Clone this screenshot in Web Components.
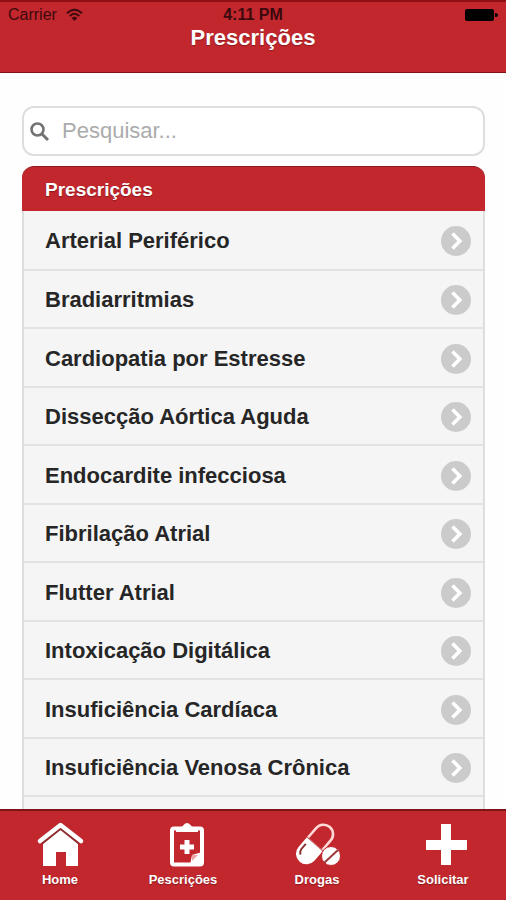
<!DOCTYPE html>
<html lang="pt-BR">
<head>
<meta charset="utf-8">
<meta name="viewport" content="width=device-width, initial-scale=1">
<title>Prescrições</title>
<style>
  :root { --red: #c1272d; --dark-red: #7d1418; --line: #dedede; --row: #f5f5f5; }
  body { margin: 0; background: #fefefe; font-family: "Liberation Sans", Arial, sans-serif; color: #262626; }
</style>
</head>
<body>
<rx-app>
  <rx-header slot="header" heading="Prescrições"></rx-header>
  <rx-search placeholder="Pesquisar..."></rx-search>
  <rx-list heading="Prescrições">
    <rx-row>Arterial Periférico</rx-row>
    <rx-row>Bradiarritmias</rx-row>
    <rx-row>Cardiopatia por Estresse</rx-row>
    <rx-row>Dissecção Aórtica Aguda</rx-row>
    <rx-row>Endocardite infecciosa</rx-row>
    <rx-row>Fibrilação Atrial</rx-row>
    <rx-row>Flutter Atrial</rx-row>
    <rx-row>Intoxicação Digitálica</rx-row>
    <rx-row>Insuficiência Cardíaca</rx-row>
    <rx-row>Insuficiência Venosa Crônica</rx-row>
  </rx-list>
  <rx-tabbar slot="footer">
    <rx-tab icon="home">Home</rx-tab>
    <rx-tab icon="clipboard">Pescrições</rx-tab>
    <rx-tab icon="pills">Drogas</rx-tab>
    <rx-tab icon="plus">Solicitar</rx-tab>
  </rx-tabbar>
</rx-app>

<script>
const define = (name, render) => customElements.define(name, class extends HTMLElement {
  connectedCallback() {
    if (!this.shadowRoot) this.attachShadow({ mode: 'open' }).innerHTML = render(this);
  }
});

define('rx-app', () => `
  <style>
    :host { display: flex; flex-direction: column; height: 100vh; }
    main { flex: 1 1 0; min-height: 0; overflow: hidden; padding: 33px 21px 0 22px; display: flex; flex-direction: column; gap: 10px; }
  </style>
  <slot name="header"></slot>
  <main><slot></slot></main>
  <slot name="footer"></slot>`);

define('rx-header', el => `
  <style>
    :host { display: block; background: var(--red); border-top: 2px solid #8f0f14; border-bottom: 1px solid var(--dark-red); }
    .status { display: grid; grid-template-columns: 1fr auto 1fr; align-items: center; padding: 3px 8px 0 8px; font-size: 16px; line-height: 20px; color: #3c090c; }
    .carrier { display: flex; align-items: center; gap: 9px; }
    .time { font-weight: bold; }
    .battery { justify-self: end; display: block; }
    svg { display: block; }
    h1 { margin: 0; padding-bottom: 22px; text-align: center; color: #fff; font-size: 22px; line-height: 25px; text-shadow: 0 1px 1px #8a1a1e; }
  </style>
  <div class="status">
    <span class="carrier">Carrier
      <svg width="17" height="14" viewBox="0 0 17 14" fill="none" stroke="#3c090c" stroke-width="2" aria-hidden="true"><path d="M1 5.2Q8.500-1.800 16 5.200M3.700 8Q8.500 3.600 13.300 8"/><path d="M8.500 13L5.700 10Q8.500 7.600 11.300 10Z" fill="#3c090c" stroke="none"/></svg>
    </span>
    <span class="time">4:11 PM</span>
    <svg class="battery" width="33" height="12" viewBox="0 0 33 12" aria-hidden="true"><rect width="29" height="12" rx="2"/><path d="M30 4Q33 4 33 6T30 8Z"/></svg>
  </div>
  <h1>${el.getAttribute('heading')}</h1>`);

define('rx-search', el => `
  <style>
    :host { display: block; }
    label { display: flex; align-items: center; gap: 13px; height: 46px; padding: 0 6px; background: #fff; border: 2px solid var(--line); border-radius: 12px; }
    svg { flex: none; }
    input { flex: 1; min-width: 0; border: 0; padding: 0; outline: 0; background: none; font: 22px/28px "Liberation Sans", Arial, sans-serif; color: #333; }
    input::placeholder { color: #ababab; opacity: 1; }
  </style>
  <label>
    <svg width="19" height="19" viewBox="0 0 19 19" fill="none" stroke="#737373" stroke-width="2.600" aria-hidden="true"><circle cx="7.500" cy="7.500" r="6"/><path d="M12 12L18 18" stroke-width="3"/></svg>
    <input type="search" placeholder="${el.getAttribute('placeholder')}" aria-label="Pesquisar">
  </label>`);

define('rx-list', el => `
  <style>
    :host { display: block; }
    h2 { margin: 0; padding: 1px 23px 0; background: var(--red); color: #fff; border-top: 1px solid #8a1a1e; border-radius: 12px 12px 0 0; font-size: 19px; line-height: 43px; text-shadow: 0 1px 1px #8a1a1e; }
    .rows { display: flow-root; background: var(--row); border: solid var(--line); border-width: 0 2px; }
    .more { height: 59px; }
    ::slotted(:nth-child(even)) { --row-height: 58px; }
    ::slotted(:first-child) { --row-height: 60px; }
  </style>
  <h2>${el.getAttribute('heading')}</h2>
  <div class="rows"><slot></slot><div class="more"></div></div>`);

define('rx-row', () => `
  <style>
    :host { display: block; }
    a { display: flex; align-items: center; justify-content: space-between; box-sizing: border-box; height: var(--row-height, 59px); padding: 2px 12px 0 21px; border-bottom: 2px solid #e2e2e2; color: inherit; text-decoration: none; font-size: 22px; line-height: 28px; font-weight: bold; }
    svg { flex: none; }
  </style>
  <a href="#"><slot></slot>
    <svg width="30" height="30" viewBox="0 0 30 30" aria-hidden="true"><circle cx="15" cy="15" r="15" fill="#cbcbcb"/><path d="M11.500 7.500L18.800 15L11.500 22.500" fill="none" stroke="#fff" stroke-width="3.600"/></svg>
  </a>`);

define('rx-tabbar', () => `
  <style>
    :host { display: block; background: var(--red); border-top: 2px solid var(--dark-red); }
    nav { display: grid; grid-template-columns: 120fr 126fr 142fr 110fr; padding: 11px 8px 10px 0; }
  </style>
  <nav><slot></slot></nav>`);

const icons = {
  home: `<path d="M15 17L32.500 5L50 17V44H38V30H28V44H15Z" fill="#fff"/>
    <path d="M12.500 20L32.500 4L52.500 20" fill="none" stroke="#8f2a2b" stroke-width="6.500"/>
    <path d="M12 19L32.500 3L53 19" fill="none" stroke="#fff" stroke-width="4.500" stroke-linejoin="round" stroke-linecap="round"/>`,
  clipboard: `<rect x="21" y="6.500" width="30" height="36" rx="2" fill="none" stroke="#fff" stroke-width="4"/>
    <path d="M25 10V6Q31 6 32.500 3Q36 -1 39.500 3Q41 6 47 6V10Z" fill="#fff"/>
    <path d="M33.500 18H38.500V22.500H43V27.500H38.500V32H33.500V27.500H29V22.500H33.500Z" fill="#fff"/>
    <path d="M39 43L41 33L51 30V43Z" fill="#fff"/><path d="M41 33H47L41 39Z" fill="#f0a5a6"/>`,
  pills: `<g transform="rotate(41 30 22)">
      <path d="M20.500 22V9A9.500 9.500 0 0 1 39.500 9V22" fill="none" stroke="#ffd9d7" stroke-width="2.600"/>
      <path d="M19.500 22H40.500V35A10.500 10.500 0 0 1 19.500 35Z" fill="#fff"/>
      <path d="M19.500 22H40.500" stroke="#c9696a" stroke-width="1.200"/>
      <path d="M23 28V35Q23.500 38 26 39.500" fill="none" stroke="#8d3336" stroke-width="2"/>
    </g>
    <circle cx="46" cy="34" r="9.500" fill="#fff" stroke="#c1272d"/><path d="M39 41L53 28" stroke="#9e3739" stroke-width="2"/>`,
  plus: `<path d="M30 2H40V18H56V28H40V43H30V28H15V18H30Z" fill="#fff"/>`
};

define('rx-tab', el => `
  <style>
    :host { display: block; }
    a { display: flex; flex-direction: column; align-items: center; gap: 2px; color: #fff; text-decoration: none; text-align: center; font-size: 13px; line-height: 20px; font-weight: bold; text-shadow: 0 1px 1px #8a1a1e; }
    svg { display: block; }
  </style>
  <a href="#"><svg width="64" height="46" viewBox="0 0 64 46" aria-hidden="true">${icons[el.getAttribute('icon')]}</svg><span><slot></slot></span></a>`);
</script>
</body>
</html>
